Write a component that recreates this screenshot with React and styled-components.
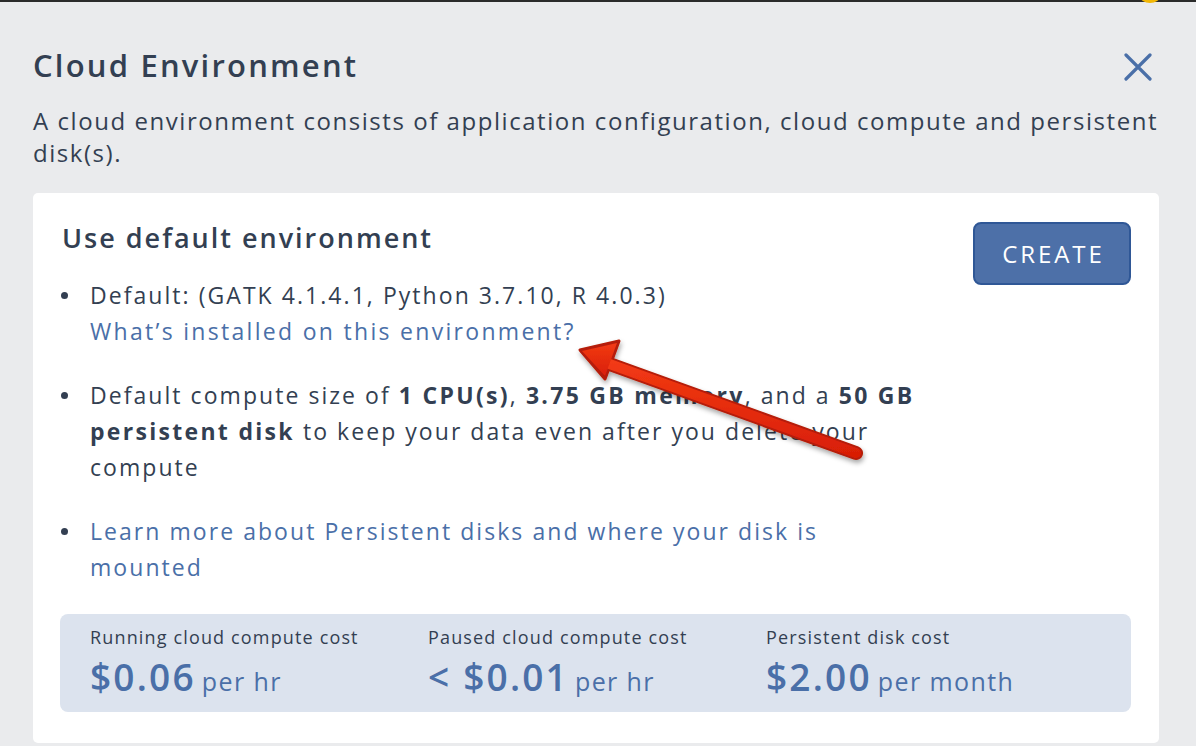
import React from "react"
import styled, { createGlobalStyle } from "styled-components"

const GlobalStyle = createGlobalStyle`
  html, body {
    margin: 0;
    padding: 0;
    background: #eaebed;
    font-family: "Open Sans", "Liberation Sans", sans-serif;
    color: #333f52;
  }
`

const Page = styled.div`
  position: relative;
  width: 1196px;
  height: 746px;
  overflow: hidden;
  background: #eaebed;
`

const TopBar = styled.div`
  position: relative;
  height: 2px;
  background: #2b2b2b;
  &::after {
    content: "";
    position: absolute;
    left: 1140px;
    top: -10px;
    width: 20px;
    height: 13px;
    border-radius: 50%;
    background: #f2b705;
  }
`

const Panel = styled.div`
  padding: 45px 37px 0 33px;
`

const Header = styled.div`
  display: flex;
  justify-content: space-between;
  align-items: center;
`

const Title = styled.h1`
  margin: 0;
  font-size: 31px;
  line-height: 36px;
  font-weight: 600;
  letter-spacing: 2.2px;
  color: #333f52;
`

const CloseButton = styled.button`
  border: none;
  background: transparent;
  padding: 0;
  margin: 4px 6px 0 0;
  width: 30px;
  height: 30px;
  display: flex;
  align-items: center;
  justify-content: center;
  cursor: pointer;
`

const Description = styled.p`
  margin: 22px 0 0;
  font-size: 24px;
  line-height: 32px;
  letter-spacing: 1.55px;
  color: #333f52;
`

const Card = styled.div`
  position: relative;
  margin-top: 24px;
  background: #fff;
  border-radius: 5px;
  padding: 28px 28px 31px 27px;
`

const Top = styled.div`
  display: flex;
  justify-content: space-between;
  align-items: flex-start;
`

const CardHeading = styled.h2`
  margin: 0 0 0 2px;
  font-size: 27px;
  line-height: 34px;
  font-weight: 600;
  letter-spacing: 2px;
  color: #333f52;
`

const CreateButton = styled.button`
  margin-top: 1px;
  width: 158px;
  height: 63px;
  border: 2px solid #2f5796;
  border-radius: 8px;
  background: #4d70a8;
  color: #fff;
  font-family: "Open Sans", "Liberation Sans", sans-serif;
  font-size: 24px;
  letter-spacing: 2.9px;
  padding: 0 0 0 3px;
  cursor: pointer;
`

const List = styled.ul`
  list-style: none;
  margin: -8px 0 0;
  padding: 0;
  display: flex;
  flex-direction: column;
  gap: 28px;
`

const Item = styled.li`
  position: relative;
  padding-left: 30px;
  font-size: 23px;
  line-height: 36px;
  letter-spacing: 2.05px;
  color: #333f52;
  white-space: nowrap;
  &::before {
    content: "";
    position: absolute;
    left: 1px;
    top: 15px;
    width: 7px;
    height: 7px;
    border-radius: 50%;
    background: #333f52;
  }
`

const Link = styled.a`
  color: #4a6fa8;
  text-decoration: none;
  letter-spacing: ${(p) => (p.$wide ? "2.3px" : "2.05px")};
`

const Strong = styled.b`
  font-weight: 700;
  letter-spacing: 2.3px;
`

const CostBox = styled.div`
  margin-top: 29px;
  background: #dce3ee;
  border-radius: 8px;
  padding: 11px 30px 9px;
  display: grid;
  grid-template-columns: repeat(3, 338px);
`

const CostLabel = styled.div`
  font-size: 18px;
  line-height: 24px;
  font-weight: 500;
  letter-spacing: 1.15px;
  color: #333f52;
`

const CostValue = styled.div`
  margin-top: 6px;
  font-size: 37px;
  line-height: 44px;
  font-weight: 600;
  letter-spacing: 2.2px;
  color: #4a6fa8;
  white-space: nowrap;
  span {
    font-size: 25px;
    font-weight: 500;
    letter-spacing: 1.4px;
    margin-left: 6px;
  }
`

const ArrowLayer = styled.svg`
  position: absolute;
  left: 527px;
  top: 127px;
  pointer-events: none;
  overflow: visible;
`

const Arrow = () => (
  <ArrowLayer width="320" height="160" viewBox="0 0 320 160">
    <defs>
      <filter id="shadow" x="-20%" y="-20%" width="140%" height="160%">
        <feDropShadow dx="1" dy="3" stdDeviation="2.5" floodColor="#000" floodOpacity="0.35" />
      </filter>
      <linearGradient id="red" x1="0" y1="0" x2="0" y2="1">
        <stop offset="0" stopColor="#f23a14" />
        <stop offset="1" stopColor="#d91f06" />
      </linearGradient>
    </defs>
    <g filter="url(#shadow)">
      <line x1="44" y1="42" x2="296" y2="133" stroke="#b51d07" strokeWidth="14" strokeLinecap="round" />
      <polygon points="20,30 59,21 45,59" fill="#b51d07" stroke="#b51d07" strokeWidth="3" strokeLinejoin="round" />
      <line x1="44" y1="42" x2="296" y2="133" stroke="url(#red)" strokeWidth="10" strokeLinecap="round" />
      <polygon points="22,31 57,23 45,56" fill="url(#red)" strokeLinejoin="round" />
    </g>
  </ArrowLayer>
)

const costs = [
  { label: "Running cloud compute cost", value: "$0.06", unit: "per hr" },
  { label: "Paused cloud compute cost", value: "< $0.01", unit: "per hr" },
  { label: "Persistent disk cost", value: "$2.00", unit: "per month" },
]

export default function App() {
  return (
    <Page>
      <GlobalStyle />
      <TopBar />
      <Panel>
        <Header>
          <Title>Cloud Environment</Title>
          <CloseButton aria-label="Close">
            <svg width="28" height="28" viewBox="0 0 28 28">
              <path d="M2 2 L26 26 M26 2 L2 26" stroke="#4a6fa8" strokeWidth="3.2" strokeLinecap="round" />
            </svg>
          </CloseButton>
        </Header>
        <Description>
          A cloud environment consists of application configuration, cloud compute and persistent
          <br />
          disk(s).
        </Description>
        <Card>
          <Top>
            <CardHeading>Use default environment</CardHeading>
            <CreateButton>CREATE</CreateButton>
          </Top>
          <List>
            <Item>
              Default: (GATK 4.1.4.1, Python 3.7.10, R 4.0.3)
              <br />
              <Link href="#" $wide>What’s installed on this environment?</Link>
            </Item>
            <Item>
              Default compute size of <Strong>1 CPU(s)</Strong>, <Strong>3.75 GB memory</Strong>, and a <Strong>50 GB</Strong>
              <br />
              <Strong>persistent disk</Strong> to keep your data even after you delete your
              <br />
              compute
            </Item>
            <Item>
              <Link href="#">
                Learn more about Persistent disks and where your disk is
                <br />
                mounted
              </Link>
            </Item>
          </List>
          <CostBox>
            {costs.map((c) => (
              <div key={c.label}>
                <CostLabel>{c.label}</CostLabel>
                <CostValue>
                  {c.value}
                  <span>{c.unit}</span>
                </CostValue>
              </div>
            ))}
          </CostBox>
          <Arrow />
        </Card>
      </Panel>
    </Page>
  )
}
